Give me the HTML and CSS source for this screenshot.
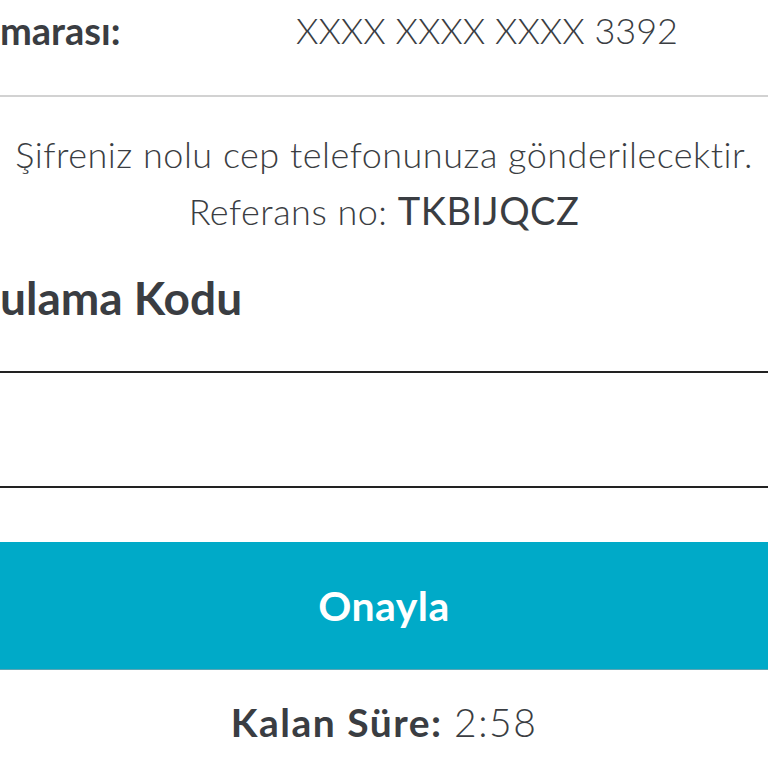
FILE: index.html
```html
<!DOCTYPE html>
<html lang="tr">
<head>
<meta charset="utf-8">
<link rel="stylesheet" href="styles.css">
</head>
<body>
<div class="page">
  <div class="card-row">
    <span class="card-label">marası:</span>
    <span class="card-value">XXXX XXXX XXXX 3392</span>
  </div>
  <div class="info">
    <p class="info-line">Şifreniz nolu cep telefonunuza gönderilecektir.</p>
    <p class="info-line">Referans no: <span class="ref">TKBIJQCZ</span></p>
  </div>
  <div class="field-label">ulama Kodu</div>
  <div class="code-input"></div>
  <button class="confirm">Onayla</button>
  <div class="timer"><span class="timer-label">Kalan Süre:</span> <span class="timer-value">2:58</span></div>
</div>
</body>
</html>
```
FILE: styles.css
```css
html, body {
  margin: 0;
  padding: 0;
  background: #ffffff;
}
.page {
  width: 768px;
  height: 768px;
  overflow: hidden;
  font-family: Lato, "Open Sans", sans-serif;
  color: #3a3d42;
  display: flex;
  flex-direction: column;
}
.card-row {
  height: 97px;
  box-sizing: border-box;
  padding-top: 7px;
  display: flex;
  align-items: flex-start;
  border-bottom: 2px solid #d2d2d2;
  flex-shrink: 0;
}
.card-label {
  font-size: 38px;
  font-weight: 700;
  width: 296px;
  line-height: 46px;
}
.card-value {
  font-size: 36px;
  font-weight: 300;
  line-height: 46px;
}
.info {
  padding-top: 29px;
  text-align: center;
}
.info-line {
  margin: 0;
  font-size: 36px;
  font-weight: 300;
  letter-spacing: 0.5px;
  line-height: 56px;
  white-space: nowrap;
}
.ref {
  font-weight: 400;
  font-size: 38px;
  letter-spacing: 0.5px;
}
.field-label {
  margin-top: 27px;
  font-size: 46px;
  font-weight: 700;
  line-height: 64px;
}
.code-input {
  margin-top: 41px;
  height: 117px;
  box-sizing: border-box;
  border-top: 2px solid #222;
  border-bottom: 2px solid #222;
  flex-shrink: 0;
}
.confirm {
  margin-top: 54px;
  height: 128px;
  width: 100%;
  flex-shrink: 0;
  border: none;
  border-bottom: 1px solid #5aa5b4;
  background: #00aac8;
  color: #ffffff;
  font-family: Lato, "Open Sans", sans-serif;
  font-size: 41px;
  font-weight: 700;
  letter-spacing: 0.5px;
  padding: 0;
}
.timer {
  margin-top: 27px;
  text-align: center;
  font-size: 39px;
  letter-spacing: 1.5px;
  line-height: 50px;
}
.timer-label {
  font-weight: 700;
}
.timer-value {
  font-weight: 300;
}
```
